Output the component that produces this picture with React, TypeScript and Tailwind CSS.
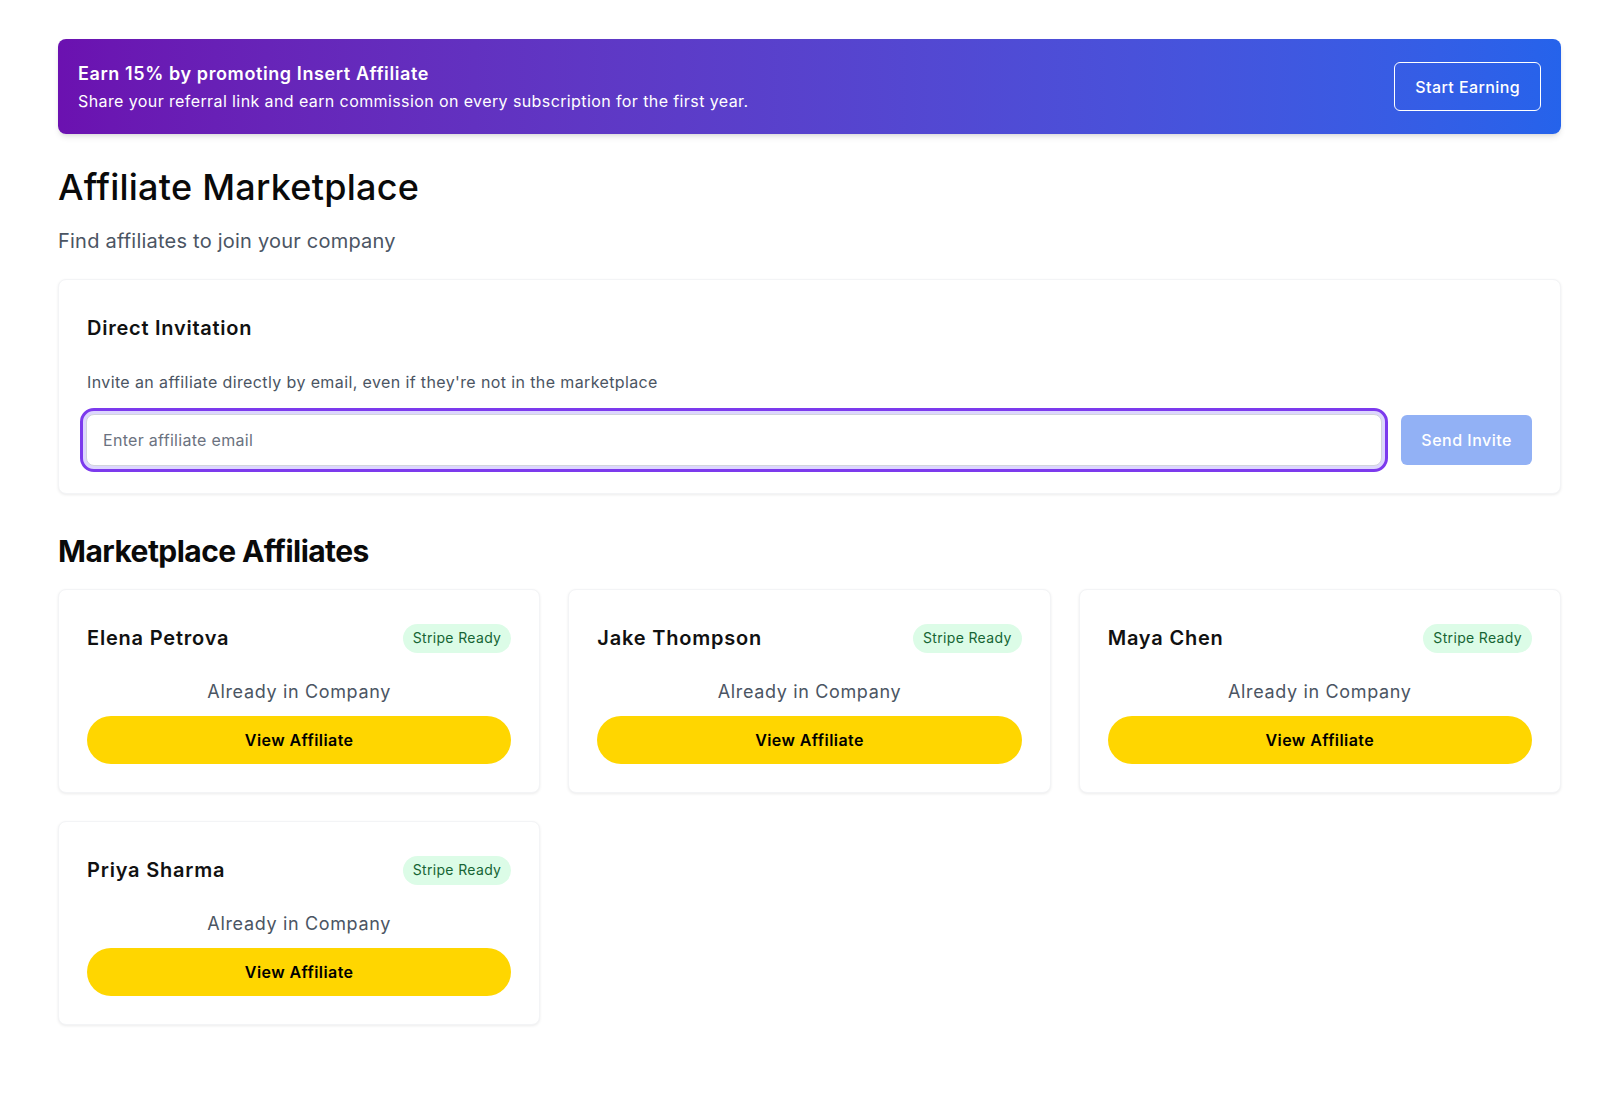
import React from "react";

const affiliates = ["Elena Petrova", "Jake Thompson", "Maya Chen", "Priya Sharma"];

function AffiliateCard({ name }: { name: string }) {
  return (
    <div className="rounded-lg bg-white border border-gray-100 shadow-[0_1px_3px_rgba(0,0,0,0.08)] px-7 pt-7 pb-7">
      <div className="flex items-center justify-between h-10">
        <h3 className="text-[20px] font-semibold text-[#111] tracking-[0.8px]">{name}</h3>
        <span className="rounded-full bg-[#dcfce7] text-[#166534] text-sm tracking-[0.34px] px-2.5 h-[29px] flex items-center">Stripe Ready</span>
      </div>
      <p className="mt-5 text-center text-lg text-[#4b5563] leading-7 tracking-[0.65px]">Already in Company</p>
      <button className="mt-2.5 w-full h-12 rounded-full bg-[#ffd600] text-black font-semibold text-base tracking-[0.43px]">View Affiliate</button>
    </div>
  );
}

export default function App() {
  return (
    <div className="min-h-[1120px] bg-white pl-[58px] pr-[39px] pt-[39px] font-['Inter',sans-serif] text-[#111]">
      <div className="h-[95px] rounded-lg bg-gradient-to-r from-[#6b11b0] to-[#2563eb] shadow-md flex items-center justify-between pl-5 pr-5">
        <div className="text-white">
          <div className="text-lg font-semibold leading-7 tracking-[0.6px]">Earn 15% by promoting Insert Affiliate</div>
          <div className="text-base leading-6 mt-[1px] tracking-[0.4px]">Share your referral link and earn commission on every subscription for the first year.</div>
        </div>
        <button className="h-[49px] px-5 rounded-md border border-white text-white text-base font-medium tracking-[0.4px]">Start Earning</button>
      </div>

      <h1 className="mt-[33px] text-4xl leading-10 font-medium text-[#0a0a0a] tracking-[0.25px]">Affiliate Marketplace</h1>
      <p className="mt-5 text-xl leading-7 text-[#4b5563] tracking-[0.22px]">Find affiliates to join your company</p>

      <div className="mt-6 rounded-lg bg-white border border-gray-100 shadow-[0_1px_3px_rgba(0,0,0,0.08)] px-7 pt-[34px] pb-[27px]">
        <h2 className="text-xl font-semibold leading-7 tracking-[0.75px]">Direct Invitation</h2>
        <p className="mt-7 text-base leading-6 text-[#4b5563] tracking-[0.38px]">Invite an affiliate directly by email, even if they're not in the marketplace</p>
        <div className="mt-[20px] flex items-center gap-[19px]">
          <input
            placeholder="Enter affiliate email"
            className="flex-1 h-[52px] ml-[-1px] rounded-lg border border-[#d1d5db] bg-white px-4 text-base tracking-[0.3px] text-[#111] placeholder:text-[#6b7280] ring-[3px] ring-[#ddd6fe] outline-[3px] outline-solid outline-[#7c3aed] outline-offset-[3px]"
          />
          <button className="h-[50px] px-5 rounded-md bg-[#92b1f5] text-white text-base font-medium tracking-[0.5px]">Send Invite</button>
        </div>
      </div>

      <h2 className="mt-[39px] text-3xl leading-9 font-bold text-[#0a0a0a] tracking-[-0.55px]">Marketplace Affiliates</h2>
      <div className="mt-[20px] grid grid-cols-3 gap-x-7 gap-y-7">
        {affiliates.map((n) => (
          <AffiliateCard key={n} name={n} />
        ))}
      </div>
    </div>
  );
}
